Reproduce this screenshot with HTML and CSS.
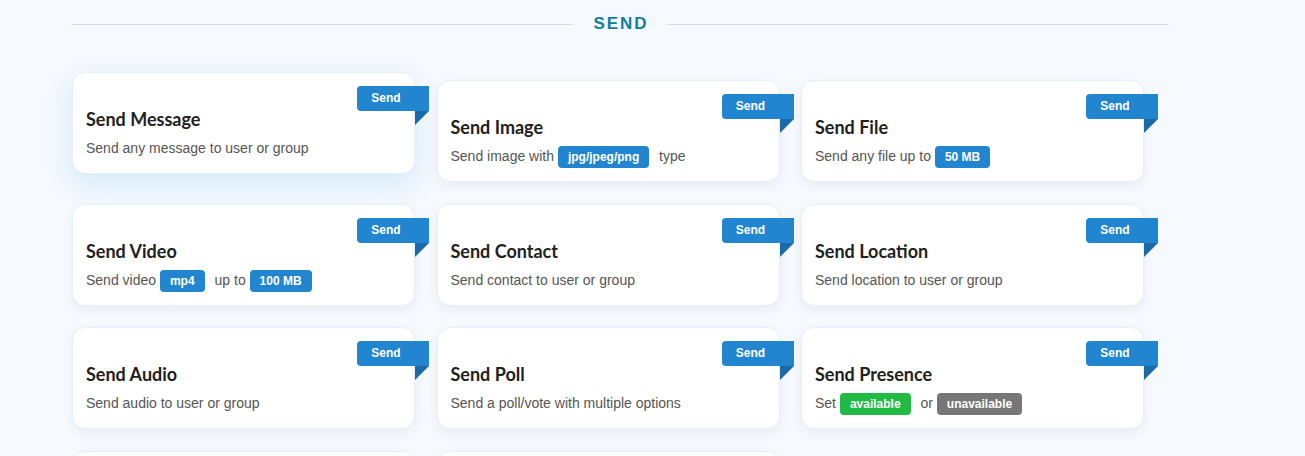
FILE: index.html
```html
<!DOCTYPE html>
<html lang="en">
<head>
<meta charset="utf-8">
<title>Send</title>
<link rel="stylesheet" href="styles.css">
</head>
<body>
<div class="page">
  <div class="section-head">
    <span class="line"></span>
    <h2 class="section-title">SEND</h2>
    <span class="line"></span>
  </div>
  <div class="grid">
    <div class="card is-hover">
      <span class="ribbon">Send</span>
      <h3 class="title">Send Message</h3>
      <p class="desc">Send any message to user or group</p>
    </div>
    <div class="card">
      <span class="ribbon">Send</span>
      <h3 class="title">Send Image</h3>
      <p class="desc">Send image with <span class="tag blue">jpg/jpeg/png</span> type</p>
    </div>
    <div class="card">
      <span class="ribbon">Send</span>
      <h3 class="title">Send File</h3>
      <p class="desc">Send any file up to <span class="tag blue">50 MB</span></p>
    </div>
    <div class="card">
      <span class="ribbon">Send</span>
      <h3 class="title">Send Video</h3>
      <p class="desc">Send video <span class="tag blue">mp4</span> up to <span class="tag blue">100 MB</span></p>
    </div>
    <div class="card">
      <span class="ribbon">Send</span>
      <h3 class="title">Send Contact</h3>
      <p class="desc">Send contact to user or group</p>
    </div>
    <div class="card">
      <span class="ribbon">Send</span>
      <h3 class="title">Send Location</h3>
      <p class="desc">Send location to user or group</p>
    </div>
    <div class="card">
      <span class="ribbon">Send</span>
      <h3 class="title">Send Audio</h3>
      <p class="desc">Send audio to user or group</p>
    </div>
    <div class="card">
      <span class="ribbon">Send</span>
      <h3 class="title">Send Poll</h3>
      <p class="desc">Send a poll/vote with multiple options</p>
    </div>
    <div class="card">
      <span class="ribbon">Send</span>
      <h3 class="title">Send Presence</h3>
      <p class="desc">Set <span class="tag green">available</span> or <span class="tag grey">unavailable</span></p>
    </div>
    <div class="card">
      <span class="ribbon">Send</span>
      <h3 class="title">Send Chat Presence</h3>
      <p class="desc">Send typing status to user or group</p>
    </div>
    <div class="card">
      <span class="ribbon">Send</span>
      <h3 class="title">Send Link</h3>
      <p class="desc">Send link to user or group</p>
    </div>
  </div>
</div>
</body>
</html>
```
FILE: styles.css
```css
* { box-sizing: border-box; }

html, body {
  margin: 0;
  padding: 0;
  background: #f6f9fe;
}

body {
  font-family: "Liberation Sans", Arial, sans-serif;
}

.page {
  width: 1098px;
  margin-left: 71px;
}

.section-head {
  display: flex;
  align-items: center;
  height: 46px;
  margin-top: 1px;
}

.line {
  flex: 1;
  height: 1px;
  background: #d6dde4;
}

.section-title {
  margin: 0 18px 0 18px;
  padding-left: 2px;
  font-family: "Liberation Sans", Arial, sans-serif;
  font-size: 17px;
  font-weight: 700;
  letter-spacing: 2px;
  color: #0f7f9f;
  line-height: 20px;
}

.grid {
  display: grid;
  grid-template-columns: repeat(3, 343px);
  column-gap: 21.5px;
  row-gap: 21.5px;
  margin-top: 33px;
  padding-left: 1px;
}

.card {
  position: relative;
  background: #ffffff;
  border: 1px solid #e3f1f8;
  border-radius: 13px;
  padding: 34px 15px 14px 13px;
  height: 102px;
  box-shadow: 0 4px 12px rgba(60, 90, 120, 0.07);
}

.card.is-hover {
  transform: translateY(-8px);
  box-shadow: 0 10px 28px rgba(40, 160, 220, 0.18);
}

.ribbon {
  position: absolute;
  top: 13px;
  right: -15px;
  width: 72px;
  height: 25px;
  padding-right: 14px;
  background: #2185d0;
  color: #ffffff;
  font-family: "Liberation Sans", Arial, sans-serif;
  font-size: 12px;
  font-weight: 700;
  line-height: 25px;
  text-align: center;
  border-radius: 4px 0 0 4px;
}

.ribbon::after {
  content: "";
  position: absolute;
  top: 100%;
  right: 0;
  width: 0;
  height: 0;
  border-top: 14px solid #1b69a6;
  border-right: 14px solid transparent;
}

.title {
  margin: 0;
  font-family: Lato, "Liberation Sans", sans-serif;
  font-size: 18px;
  font-weight: 700;
  line-height: 24px;
  color: #212121;
}

.desc {
  margin: 6px 0 0;
  height: 22px;
  font-size: 14px;
  line-height: 22px;
  color: #555555;
  white-space: nowrap;
}

.tag {
  display: inline-block;
  vertical-align: middle;
  margin-right: 6px;
  padding: 4px 10px;
  border-radius: 4px;
  font-size: 12px;
  font-weight: 700;
  line-height: 14px;
  color: #ffffff;
}

.tag.blue { background: #2185d0; }
.tag.green { background: #21ba45; }
.tag.grey { background: #767676; }
```
